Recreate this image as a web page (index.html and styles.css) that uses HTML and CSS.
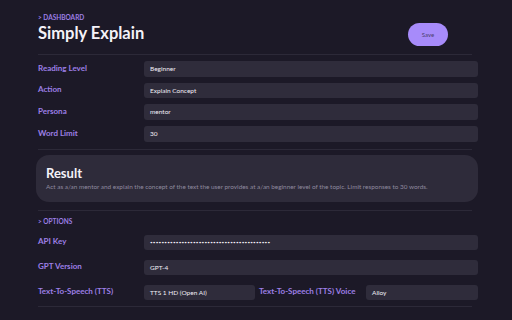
FILE: index.html
```html
<!DOCTYPE html>
<html>
<head>
<meta charset="utf-8">
<link rel="stylesheet" href="styles.css">
</head>
<body>
<div class="page">
  <header class="header">
    <div class="heading">
      <div class="crumb">&gt; DASHBOARD</div>
      <h1 class="title">Simply Explain</h1>
    </div>
    <button class="save">Save</button>
  </header>
  <hr class="divider">
  <section class="rows rows-main">
    <div class="row"><div class="label">Reading Level</div><div class="field">Beginner</div></div>
    <div class="row"><div class="label">Action</div><div class="field">Explain Concept</div></div>
    <div class="row"><div class="label">Persona</div><div class="field">mentor</div></div>
    <div class="row"><div class="label">Word Limit</div><div class="field">30</div></div>
  </section>
  <hr class="divider">
  <section class="result">
    <h2 class="result-title">Result</h2>
    <p class="result-text">Act as a/an mentor and explain the concept of the text the user provides at a/an beginner level of the topic. Limit responses to 30 words.</p>
  </section>
  <hr class="divider">
  <div class="crumb crumb-options">&gt; OPTIONS</div>
  <section class="rows rows-options">
    <div class="row"><div class="label">API Key</div><div class="field field-secret">••••••••••••••••••••••••••••••••••••••••••</div></div>
    <div class="row"><div class="label">GPT Version</div><div class="field">GPT-4</div></div>
    <div class="row">
      <div class="label">Text-To-Speech (TTS)</div>
      <div class="field field-half">TTS 1 HD (Open AI)</div>
      <div class="label label-inline">Text-To-Speech (TTS) Voice</div>
      <div class="field">Alloy</div>
    </div>
  </section>
  <hr class="divider">
</div>
</body>
</html>
```
FILE: styles.css
```css
html, body {
  margin: 0;
  padding: 0;
  background: #1c1927;
}
body {
  font-family: Lato, "Noto Sans", sans-serif;
  color: #e8e6ee;
  width: 512px;
  height: 320px;
  overflow: hidden;
}
.page {
  padding: 13px 34px 0 38px;
}
.header {
  display: flex;
  justify-content: space-between;
  align-items: flex-start;
  padding-right: 30px;
  height: 41px;
}
.crumb {
  font-size: 6.5px;
  font-weight: 700;
  color: #9d7fe6;
  line-height: 9px;
}
.title {
  margin: 0;
  font-size: 16.5px;
  font-weight: 700;
  line-height: 22px;
  color: #f4f2f8;
}
.save {
  margin-top: 10px;
  width: 40px;
  height: 23px;
  border: none;
  border-radius: 12px;
  background: #a78bfa;
  color: #4a3d6e;
  font-family: Lato, sans-serif;
  font-size: 6px;
  padding: 0;
}
.divider {
  margin: 0 6px 0 0;
  border: none;
  height: 1px;
  background: #2c2938;
}
.rows {
  display: flex;
  flex-direction: column;
}
.rows-main {
  padding: 6px 0 7px;
  gap: 6.2px;
}
.rows-options {
  padding: 9px 0 6px;
  gap: 9.5px;
}
.row {
  display: flex;
  align-items: center;
  height: 15.5px;
}
.label {
  width: 106px;
  flex: none;
  font-size: 8px;
  font-weight: 700;
  color: #9d7fe6;
  white-space: nowrap;
  margin-top: -2px;
}
.label-inline {
  width: 107px;
  margin-left: 4px;
}
.field {
  flex: 1;
  height: 15.5px;
  box-sizing: border-box;
  background: #2f2c3b;
  border-radius: 3px;
  padding-left: 6px;
  font-size: 6.5px;
  line-height: 15.5px;
  color: #f1eff6;
  white-space: nowrap;
  overflow: hidden;
}
.field-half {
  flex: none;
  width: 111px;
}
.field-secret {
  font-size: 4.6px;
  letter-spacing: 0.2px;
}
.result {
  margin: 5px 0 8px -2px;
  background: #2e2b3a;
  border-radius: 13px;
  padding: 10px 10px 0;
  height: 37px;
}
.result-title {
  margin: 0;
  font-size: 13px;
  font-weight: 700;
  line-height: 16px;
  color: #f4f2f8;
}
.result-text {
  margin: 2px 0 0;
  font-size: 6.4px;
  color: #8f8a9f;
  white-space: nowrap;
}
.crumb-options {
  margin-top: 6px;
}
```
